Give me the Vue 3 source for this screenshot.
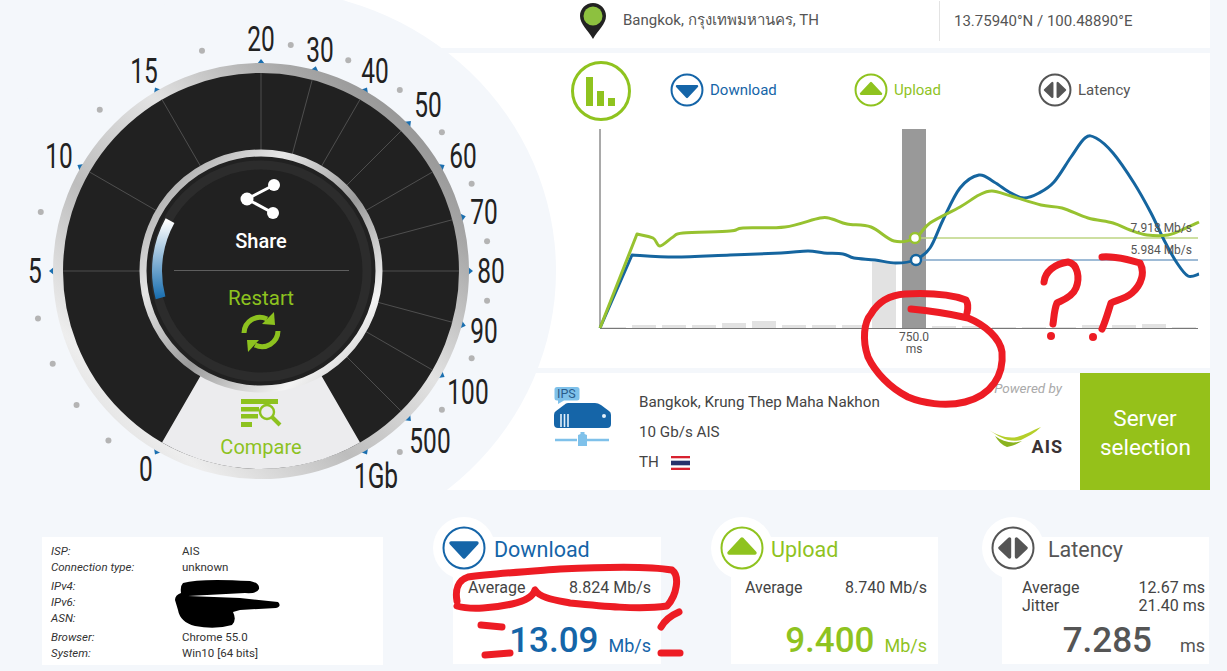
<script setup>
const cx = 261
const cy = 271

const polar = (r, deg) => {
  const a = (deg * Math.PI) / 180
  return [cx + r * Math.sin(a), cy - r * Math.cos(a)]
}

// gauge scale: label, tick angle and where the number sits
const scale = [
  { t: '0', a: -150, x: 146, y: 469 },
  { t: '5', a: -90, x: 35, y: 271 },
  { t: '10', a: -60, x: 59, y: 156 },
  { t: '15', a: -30, x: 144, y: 71 },
  { t: '20', a: 0, x: 261, y: 39 },
  { t: '30', a: 15, x: 320, y: 50 },
  { t: '40', a: 30, x: 375, y: 71 },
  { t: '50', a: 45, x: 428, y: 105 },
  { t: '60', a: 60, x: 463, y: 156 },
  { t: '70', a: 75, x: 484, y: 212 },
  { t: '80', a: 90, x: 491, y: 271 },
  { t: '90', a: 105, x: 484, y: 331 },
  { t: '100', a: 120, x: 468, y: 392 },
  { t: '500', a: 135, x: 430, y: 441 },
  { t: '1Gb', a: 150, x: 376, y: 476 },
]

const dotAngles = [-138, -126, -114, -102, -75, -45, -15, 7.5, 22.5, 37.5, 52.5, 67.5, 82.5, 97.5, 112.5, 127.5, 142.5]
const dots = dotAngles.map((a) => polar(228, a))

const dividers = scale
  .filter((s) => Math.abs(s.a) < 150)
  .map((s) => {
    const [x1, y1] = polar(120, s.a)
    const [x2, y2] = polar(198, s.a)
    return { x1, y1, x2, y2 }
  })

const ringPoint = (r, deg) => polar(r, deg).join(' ')
const wedge = `M${ringPoint(198, -150)} A198 198 0 0 0 ${ringPoint(198, 150)} L${ringPoint(120, 150)} A120 120 0 0 1 ${ringPoint(120, -150)} Z`
const blueArc = `M${ringPoint(104, -105)} A104 104 0 0 1 ${ringPoint(104, -61)}`

const icons = {
  down: 'M9 17 H35 L22 31 Z',
  up: 'M22 13 L35 27 H9 Z',
  latency: 'M18.5 13 V31 L9 22 Z M25.5 13 V31 L35 22 Z',
}

const legend = [
  { name: 'Download', kind: 'down', cls: 'blue' },
  { name: 'Upload', kind: 'up', cls: 'green' },
  { name: 'Latency', kind: 'latency', cls: 'gray' },
]

const stats = [
  { name: 'Download', kind: 'down', cls: 'blue', rows: [['Average', '8.824 Mb/s']], big: '13.09', unit: 'Mb/s' },
  { name: 'Upload', kind: 'up', cls: 'green', rows: [['Average', '8.740 Mb/s']], big: '9.400', unit: 'Mb/s' },
  { name: 'Latency', kind: 'latency', cls: 'gray', rows: [['Average', '12.67 ms'], ['Jitter', '21.40 ms']], big: '7.285', unit: 'ms' },
]

const infoGroups = [
  [['ISP:', 'AIS'], ['Connection type:', 'unknown']],
  [['IPv4:', ''], ['IPv6:', ''], ['ASN:', '']],
  [['Browser:', 'Chrome 55.0'], ['System:', 'Win10 [64 bits]']],
]

const bars = [
  [602, 1], [632, 3], [662, 3], [692, 3], [722, 5], [752, 7], [782, 3], [812, 3], [842, 3], [872, 66],
  [932, 2], [962, 2], [992, 1], [1022, 1], [1052, 1], [1082, 3], [1112, 3], [1142, 4], [1172, 1],
]

const downloadPts = [
  [632, 255], [675, 257], [730, 255], [781, 253], [808, 251], [824, 253], [843, 254], [854, 258], [875, 260],
  [896, 263], [915, 260], [930, 248], [943, 220], [960, 188], [979, 175], [994, 182], [1011, 193], [1024, 198],
  [1039, 193], [1054, 182], [1071, 157], [1085, 138], [1096, 138], [1113, 153], [1134, 183], [1151, 213],
  [1164, 240], [1177, 263], [1188, 276], [1199, 274],
]
const uploadPts = [
  [637, 234], [653, 238], [660, 246], [673, 237], [683, 233], [730, 231], [743, 228], [785, 227], [820, 218],
  [832, 219], [847, 224], [871, 227], [894, 241], [915, 238], [930, 223], [960, 207], [979, 195], [992, 191],
  [1011, 196], [1041, 205], [1062, 208], [1088, 218], [1113, 223], [1130, 230], [1147, 235], [1168, 235],
  [1186, 228], [1199, 222],
]

// straight rise from the origin, then a soft curve through the samples
const curve = (pts) => {
  let d = `M600 328 L${pts[0][0]} ${pts[0][1]}`
  for (let i = 0; i < pts.length - 1; i++) {
    const p0 = pts[i - 1] || pts[i]
    const p1 = pts[i]
    const p2 = pts[i + 1]
    const p3 = pts[i + 2] || p2
    const c1 = [p1[0] + (p2[0] - p0[0]) / 6, p1[1] + (p2[1] - p0[1]) / 6]
    const c2 = [p2[0] - (p3[0] - p1[0]) / 6, p2[1] - (p3[1] - p1[1]) / 6]
    d += ` C${c1[0]} ${c1[1]} ${c2[0]} ${c2[1]} ${p2[0]} ${p2[1]}`
  }
  return d
}
const downloadLine = curve(downloadPts)
const uploadLine = curve(uploadPts)

// the pen marks someone drew over the screenshot
const redMarks = [
  'M911 309 C935 311 955 315 968 318 C985 325 1000 338 1002 352 C1004 375 992 395 965 402 C945 407 922 403 908 397 C890 388 875 372 868 357 C862 340 864 322 871 314 C878 302 890 295 905 294 C925 293 950 294 966 300 C969 305 968 309 967 313',
  'M1044 282 C1045 272 1054 264 1068 262 C1078 264 1080 278 1076 288 C1072 298 1060 301 1057 303 C1054 310 1054 318 1053 324',
  'M1102 257 C1115 256 1130 260 1140 263 C1145 272 1142 284 1132 293 C1124 300 1115 300 1111 303 C1108 312 1106 320 1102 329',
  'M457 601 C455 590 458 580 468 577 C490 574 520 572 560 569 C600 567 650 566 672 570 C680 576 677 595 667 606 C640 610 600 606 570 603 C555 600 540 598 535 590 C533 597 525 601 512 604 C495 608 470 610 457 606',
  'M481 625 L502 627',
  'M485 655 L510 653',
  'M661 627 C665 620 672 615 679 612',
  'M661 653 L680 653',
]
const blackMark = 'M183 583 Q200 578 250 581 Q260 583 259 589 Q257 594 245 593 L188 596 L240 598 L278 602 Q282 606 276 608 L240 610 L233 612 Q237 620 232 625 Q215 630 195 626 Q180 622 178 610 L175 600 Q175 595 181 593 Q180 586 183 583 Z'
</script>

<template>
  <div class="page">
    <div class="panels">
      <section class="panel location">
        <svg class="pin" viewBox="0 0 26 36" width="26" height="36">
          <path d="M13 0 C5.8 0 0 5.8 0 13 C0 21 8 27 13 36 C18 27 26 21 26 13 C26 5.8 20.2 0 13 0 Z" fill="#222" />
          <circle cx="13" cy="13" r="9.5" fill="#8dc13f" />
        </svg>
        <span class="place">Bangkok, กรุงเทพมหานคร, TH</span>
        <span class="coords">13.75940°N / 100.48890°E</span>
      </section>

      <section class="panel chart">
        <header class="chart-head">
          <svg class="bars-icon" viewBox="0 0 60 60" width="60" height="60">
            <circle cx="30" cy="30" r="28.5" fill="#fff" stroke="#8fc31f" stroke-width="3" />
            <rect x="15" y="16" width="7" height="29" fill="#8fc31f" />
            <rect x="26" y="30" width="7" height="15" fill="#8fc31f" />
            <rect x="37" y="37" width="7" height="8" fill="#8fc31f" />
          </svg>
          <div v-for="item in legend" :key="item.name" class="legend-item" :class="item.cls">
            <svg class="ring" viewBox="0 0 44 44" width="34" height="34">
              <circle cx="22" cy="22" r="20" fill="#fff" stroke="currentColor" stroke-width="2.6" />
              <path :d="icons[item.kind]" fill="currentColor" stroke="currentColor" stroke-width="3" stroke-linejoin="round" />
            </svg>
            <span>{{ item.name }}</span>
          </div>
        </header>

        <svg class="graph" viewBox="595 125 610 235" width="610" height="235">
          <rect v-for="b in bars" :key="b[0]" :x="b[0]" :y="328 - b[1]" width="24" :height="b[1]" fill="#e2e2e2" />
          <rect x="902" y="129" width="24" height="199" fill="#999" />
          <line x1="600" y1="129" x2="600" y2="328" stroke="#555" />
          <line x1="600" y1="328.5" x2="1198" y2="328.5" stroke="#777" />
          <line x1="920" y1="238" x2="1198" y2="238" stroke="#bcd582" stroke-width="1.5" />
          <line x1="920" y1="260" x2="1198" y2="260" stroke="#7ea5c8" stroke-width="1.5" />
          <path :d="downloadLine" fill="none" stroke="#15659f" stroke-width="3" stroke-linejoin="round" />
          <path :d="uploadLine" fill="none" stroke="#97c230" stroke-width="3" stroke-linejoin="round" />
          <circle cx="915" cy="238" r="5" fill="#fff" stroke="#97c230" stroke-width="2.4" />
          <circle cx="916" cy="260" r="5" fill="#fff" stroke="#15659f" stroke-width="2.4" />
          <text x="1192" y="232" text-anchor="end" class="graph-label">7.918 Mb/s</text>
          <text x="1192" y="254" text-anchor="end" class="graph-label">5.984 Mb/s</text>
          <text x="914" y="341" text-anchor="middle" class="graph-label">750.0</text>
          <text x="914" y="353" text-anchor="middle" class="graph-label">ms</text>
        </svg>
      </section>

      <section class="panel server">
        <svg class="server-icon" viewBox="0 0 58 60" width="58" height="60">
          <path d="M3 0 H23 a2.5 2.5 0 0 1 2.5 2.5 V11 a2.5 2.5 0 0 1 -2.5 2.5 H10 L4 17 V13.5 H3 a2.5 2.5 0 0 1 -2.5 -2.5 V2.5 A2.5 2.5 0 0 1 3 0 Z" fill="#7fc1ea" />
          <text x="3" y="11" class="ips">IPS</text>
          <path d="M14 16 H41 Q44 16 47 18 L55 24 Q57 25 57 28 V37 a4 4 0 0 1 -4 4 H4 a4 4 0 0 1 -4 -4 V28 Q0 25 2 24 L10 18 Q12 16 14 16 Z" fill="#1565a8" />
          <path d="M7 27 V40 M10.5 27 V40 M14 27 V40" stroke="#e3f0fb" stroke-width="1.6" />
          <circle cx="50" cy="29" r="2" fill="#e3f0fb" />
          <path d="M1 53 H23 M33 53 H55" stroke="#7fc1ea" stroke-width="2.4" />
          <path d="M26.5 45 H30.5 V47 L33 48 V59 H24 V48 L26.5 47 Z" fill="#7fc1ea" />
        </svg>
        <div class="server-info">
          <div>Bangkok, Krung Thep Maha Nakhon</div>
          <div>10 Gb/s AIS</div>
          <div class="country">
            TH
            <svg viewBox="0 0 19 14" width="19" height="14">
              <rect width="19" height="14" fill="#d8212f" />
              <rect y="2.3" width="19" height="9.4" fill="#fff" />
              <rect y="4.7" width="19" height="4.6" fill="#27316b" />
            </svg>
          </div>
        </div>
        <div class="powered">
          <em>Powered by</em>
          <div class="ais">
            <svg viewBox="0 0 52 22" width="52" height="22">
              <path d="M0 3 C8 8 18 12 28 10 C36 8 44 3 52 0 C46 6 38 10 32 13 C20 16 10 10 0 3 Z" fill="#b5cf2a" />
              <path d="M6 9 C14 15 24 17 33 14 C28 17 24 19 18 20 C13 18 9 14 6 9 Z" fill="#8ab31f" />
            </svg>
            <b>AIS</b>
          </div>
        </div>
        <button class="select-btn">Server selection</button>
      </section>
    </div>

    <div class="bottom">
      <div class="info">
        <div v-for="(group, i) in infoGroups" :key="i" class="info-group">
          <div v-for="row in group" :key="row[0]" class="info-row">
            <i>{{ row[0] }}</i>
            <span>{{ row[1] }}</span>
          </div>
        </div>
      </div>

      <div v-for="s in stats" :key="s.name" class="stat" :class="s.cls">
        <div class="badge">
          <svg viewBox="0 0 44 44" width="44" height="44">
            <circle cx="22" cy="22" r="20.5" fill="#fff" stroke="currentColor" stroke-width="2" />
            <path :d="icons[s.kind]" fill="currentColor" stroke="currentColor" stroke-width="3.4" stroke-linejoin="round" />
          </svg>
        </div>
        <div class="stat-title">{{ s.name }}</div>
        <div class="stat-rows">
          <div v-for="r in s.rows" :key="r[0]" class="stat-row">
            <span>{{ r[0] }}</span>
            <span>{{ r[1] }}</span>
          </div>
        </div>
        <div class="stat-big">
          <strong>{{ s.big }}</strong>
          <small>{{ s.unit }}</small>
        </div>
      </div>
    </div>

    <svg class="gauge" viewBox="0 0 560 515" width="560" height="515">
      <defs>
        <linearGradient id="chrome" x1="1" y1="0" x2="0" y2="1">
          <stop offset="0" stop-color="#7d7d7d" />
          <stop offset="0.22" stop-color="#a8a8a8" />
          <stop offset="0.42" stop-color="#e2e2e2" />
          <stop offset="0.62" stop-color="#bdbdbd" />
          <stop offset="0.82" stop-color="#eeeeee" />
          <stop offset="1" stop-color="#cfcfcf" />
        </linearGradient>
        <linearGradient id="chromeInner" x1="0" y1="0" x2="1" y2="1">
          <stop offset="0" stop-color="#8f8f8f" />
          <stop offset="0.3" stop-color="#e6e6e6" />
          <stop offset="0.55" stop-color="#9a9a9a" />
          <stop offset="0.8" stop-color="#f4f4f4" />
          <stop offset="1" stop-color="#b5b5b5" />
        </linearGradient>
        <linearGradient id="level" x1="0" y1="0" x2="0" y2="1">
          <stop offset="0" stop-color="#ffffff" />
          <stop offset="1" stop-color="#1a6fb0" />
        </linearGradient>
      </defs>

      <ellipse :cx="cx" :cy="cy" rx="295" ry="282" fill="#f4f7fb" />

      <circle v-for="(d, i) in dots" :key="i" :cx="d[0]" :cy="d[1]" r="3" fill="#b4b4b4" />
      <polygon
        v-for="s in scale"
        :key="s.t"
        points="-4,-207 0,-212 4,-207"
        fill="#1a6fb0"
        :transform="`translate(${cx} ${cy}) rotate(${s.a})`"
      />
      <text
        v-for="s in scale"
        :key="s.t"
        class="scale-num"
        text-anchor="middle"
        dominant-baseline="central"
        :transform="`translate(${s.x} ${s.y}) scale(.7 1)`"
      >{{ s.t }}</text>

      <circle :cx="cx" :cy="cy" r="203" fill="#212121" stroke="url(#chrome)" stroke-width="10" />
      <path :d="wedge" fill="#ececee" />
      <line
        v-for="(d, i) in dividers"
        :key="i"
        :x1="d.x1"
        :y1="d.y1"
        :x2="d.x2"
        :y2="d.y2"
        stroke="#5a5a5a"
        stroke-width="0.8"
      />

      <circle :cx="cx" :cy="cy" r="118" fill="#212121" stroke="url(#chromeInner)" stroke-width="7" />
      <circle :cx="cx" :cy="cy" r="106" fill="none" stroke="#2c2c2c" stroke-width="9" />
      <path :d="blueArc" fill="none" stroke="url(#level)" stroke-width="10" />

      <g fill="#fff" stroke="#fff">
        <path d="M274 185 L247 199 L273 213" fill="none" stroke-width="3" />
        <circle cx="274" cy="185" r="6" stroke="none" />
        <circle cx="247" cy="199" r="6.5" stroke="none" />
        <circle cx="273" cy="213" r="6" stroke="none" />
      </g>
      <text x="261" y="248" text-anchor="middle" class="center-label share">Share</text>
      <line x1="174" y1="270.5" x2="349" y2="270.5" stroke="#5e5e5e" />
      <text x="261" y="305" text-anchor="middle" class="center-label lime">Restart</text>
      <g fill="#8dc21f">
        <path d="M244 333 A16 16 0 0 1 267 319" fill="none" stroke="#8dc21f" stroke-width="5" />
        <polygon points="274,312 275,325 262,324" />
        <path d="M278 331 A16 16 0 0 1 255 345" fill="none" stroke="#8dc21f" stroke-width="5" />
        <polygon points="248,352 247,340 259,340" />
      </g>

      <g fill="#8dc21f">
        <rect x="241" y="399" width="37" height="5" />
        <rect x="241" y="407" width="18" height="4.5" />
        <rect x="241" y="414" width="17" height="4.5" />
        <rect x="241" y="422" width="11" height="5" />
        <circle cx="267" cy="412" r="7" fill="#ececee" stroke="#8dc21f" stroke-width="2.4" />
        <line x1="272" y1="417" x2="280" y2="425" stroke="#8dc21f" stroke-width="4" />
      </g>
      <text x="261" y="454" text-anchor="middle" class="center-label lime compare">Compare</text>
    </svg>

    <svg class="scribbles" viewBox="0 0 1227 671" width="1227" height="671">
      <path v-for="(d, i) in redMarks" :key="i" :d="d" fill="none" stroke="#ed1c24" stroke-width="7" stroke-linecap="round" stroke-linejoin="round" />
      <circle cx="1051" cy="336" r="4" fill="#ed1c24" />
      <circle cx="1093" cy="337" r="4" fill="#ed1c24" />
      <path :d="blackMark" fill="#000" />
    </svg>
  </div>
</template>

<style>
html,
body {
  margin: 0;
  background: #f4f7fb;
}
</style>

<style scoped>
.page {
  position: relative;
  width: 1227px;
  height: 671px;
  overflow: hidden;
  background: #f4f7fb;
  font-family: Roboto, "Noto Sans", "Noto Sans CJK SC", sans-serif;
  color: #444;
}

.panels {
  display: flex;
  flex-direction: column;
  gap: 5px;
  width: 870px;
  margin-left: 340px;
}

.panel {
  background: #fff;
}

.location {
  display: flex;
  align-items: center;
  height: 48px;
  font-size: 15px;
  color: #555;
}

.pin {
  margin-left: 240px;
  margin-top: -7px;
}

.place {
  margin-left: 17px;
  margin-top: -8px;
  width: 316px;
  line-height: 20px;
}

.coords {
  display: flex;
  align-items: center;
  height: 40px;
  margin-top: -6px;
  padding-left: 14px;
  border-left: 1px solid #e3e3e3;
}

.chart {
  height: 315px;
}

.chart-head {
  display: flex;
  align-items: center;
  height: 60px;
  padding: 7px 0 1px 231px;
}

.bars-icon {
  flex: none;
  margin-top: 1px;
  margin-right: 39px;
}

.legend-item {
  flex: none;
  display: flex;
  align-items: center;
  gap: 6px;
  width: 184px;
  font-size: 15px;
}

.graph {
  display: block;
  margin: 4px 0 0 255px;
}

.graph-label {
  font-size: 12px;
  fill: #555;
  font-family: Roboto, sans-serif;
}

.blue {
  color: #1565a8;
}

.green {
  color: #8fc31f;
}

.gray {
  color: #555;
}

.server {
  display: flex;
  height: 117px;
}

.server-icon {
  flex: none;
  margin: 14px 0 0 214px;
}

.ips {
  font-size: 12.5px;
  fill: #2a5c8a;
  font-family: Roboto, sans-serif;
}

.server-info {
  display: flex;
  flex-direction: column;
  gap: 11px;
  margin: 20px 0 0 27px;
  font-size: 15.2px;
  line-height: 19px;
  color: #444;
}

.country {
  display: flex;
  align-items: center;
  gap: 12px;
}

.powered {
  display: flex;
  flex-direction: column;
  align-items: flex-end;
  width: 73px;
  margin-left: auto;
  margin-right: 18px;
}

.powered em {
  margin-top: 7px;
  font-size: 13.5px;
  line-height: 16px;
  color: #aaa;
  white-space: nowrap;
}

.ais {
  position: relative;
  width: 73px;
  height: 30px;
  margin-top: 31px;
}

.ais svg {
  display: block;
}

.ais b {
  position: absolute;
  right: -1px;
  top: 10px;
  font-size: 18px;
  line-height: 20px;
  letter-spacing: 1px;
  color: #3a3234;
}

.select-btn {
  width: 130px;
  border: none;
  padding: 2px 20px 0;
  background: #95c11a;
  color: #fff;
  font: 400 22.5px/29px Roboto, sans-serif;
}

.bottom {
  display: flex;
  margin: 47px 0 0 42px;
}

.info {
  width: 341px;
  height: 128px;
  box-sizing: border-box;
  padding-top: 6px;
  background: #fff;
  font-size: 11.5px;
  line-height: 16px;
  color: #333;
}

.info-group + .info-group {
  margin-top: 3px;
}

.info-row {
  display: grid;
  grid-template-columns: 131px 1fr;
  padding-left: 9px;
}

.stat {
  position: relative;
  display: flex;
  flex-direction: column;
  width: 208px;
  height: 127px;
  box-sizing: border-box;
  margin-left: 70px;
  padding: 0 10px 0 15px;
  background: #fff;
}

.stat.green {
  width: 207px;
  padding-right: 11px;
  padding-left: 14px;
}

.stat.gray {
  width: 207px;
  margin-left: 64px;
  padding: 0 4px 0 20px;
}

.badge {
  position: absolute;
  left: -20px;
  top: -20px;
  display: flex;
  align-items: center;
  justify-content: center;
  width: 62px;
  height: 62px;
  border-radius: 50%;
  background: #fff;
}

.stat-title {
  position: relative;
  height: 26px;
  margin-left: 26px;
  font-size: 21.5px;
  line-height: 26px;
}

.stat-rows {
  margin-top: 16px;
  font-size: 16px;
  line-height: 18px;
  color: #444;
}

.stat-row {
  display: flex;
  justify-content: space-between;
}

.stat-big {
  display: flex;
  align-items: baseline;
  justify-content: flex-end;
  gap: 10px;
  margin-top: auto;
  line-height: 36px;
}

.stat.gray .stat-big {
  gap: 28px;
}

.stat-big strong {
  font-size: 35px;
  font-weight: 500;
}

.stat-big small {
  font-size: 18px;
}

.gauge {
  position: absolute;
  left: 0;
  top: 0;
}

.scale-num {
  font-family: Roboto, sans-serif;
  font-size: 35px;
  fill: #222;
}

.center-label {
  font-family: Roboto, sans-serif;
  font-size: 20px;
  font-weight: 500;
}

.share {
  fill: #fff;
}

.lime {
  fill: #8dc21f;
  font-weight: 400;
  font-size: 20.5px;
}

.compare {
  font-size: 20px;
}

.scribbles {
  position: absolute;
  left: 0;
  top: 0;
  pointer-events: none;
}
</style>
